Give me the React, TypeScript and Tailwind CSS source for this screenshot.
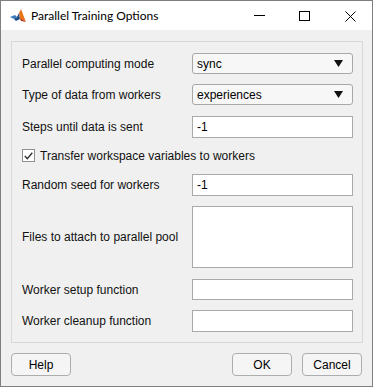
import React from "react";

const font = { fontFamily: '"Liberation Sans", Arial, sans-serif' };

function Dropdown({ value }: { value: string }) {
  return (
    <div className="w-[161px] h-[21px] rounded-[3px] border border-[#a8a8a8] bg-[#f7f7f7] flex items-center justify-between pl-[4px] pr-[9px] text-[12px] text-black">
      <span>{value}</span>
      <svg width="9" height="7" viewBox="0 0 9 7"><path d="M0 0 H9 L4.5 7 Z" fill="#111" /></svg>
    </div>
  );
}

function Field({ value = "", h = "h-[22px]" }: { value?: string; h?: string }) {
  return (
    <div className={`w-[161px] ${h} border border-[#a9a9a9] bg-white flex items-center pl-[4px] text-[12px] text-black`}>
      {value}
    </div>
  );
}

function Row({ label, children, className = "" }: { label: string; children: React.ReactNode; className?: string }) {
  return (
    <div className={`flex items-center justify-between ${className}`}>
      <span className="text-[12px] text-[#111]">{label}</span>
      {children}
    </div>
  );
}

function Btn({ label, w }: { label: string; w: string }) {
  return (
    <div className={`${w} h-[23px] rounded-[4px] border border-[#adadad] bg-[#f5f5f5] flex items-center justify-center text-[12px] text-black`}>
      {label}
    </div>
  );
}

export default function App() {
  return (
    <div className="w-[374px] h-[388px] bg-white">
      <div className="w-[373px] h-[387px] border border-[#7f7f7f] flex flex-col" style={font}>
        <div className="h-[29px] bg-white flex items-center relative">
          <svg className="ml-[9px]" width="16" height="14" viewBox="0 0 16 14">
            <path d="M0 8 L5 6 L7 8 L4 10 Z" fill="#3a7bbf" />
            <path d="M4 10 L7 8 L9 4 L10 10 L6 12 Z" fill="#1f4f8a" />
            <path d="M9 4 L11 0 L14 8 L16 13 L12 10 L10 10 Z" fill="#e8741a" />
            <path d="M10 10 L12 10 L16 13 L11 12 Z" fill="#c0392b" />
          </svg>
          <span className="ml-[5px] text-[12px] text-black" style={{ fontFamily: 'Lato, "Noto Sans", sans-serif' }}>
            Parallel Training Options
          </span>
          <div className="absolute left-[253px] top-[14px] w-[11px] h-[1px] bg-black" />
          <div className="absolute left-[298px] top-[10px] w-[11px] h-[10px] border border-black" />
          <svg className="absolute left-[344px] top-[10px]" width="11" height="11" viewBox="0 0 11 11">
            <path d="M0.5 0.5 L10.5 10.5 M10.5 0.5 L0.5 10.5" stroke="#000" strokeWidth="1" />
          </svg>
        </div>
        <div className="flex-1 bg-[#f0f0f0] flex flex-col">
          <div className="ml-[10px] mt-[11px] w-[352px] h-[302px] border border-[#d9d9d9] flex flex-col pl-[10px] pr-[9px] pt-[11px]">
            <Row label="Parallel computing mode"><Dropdown value="sync" /></Row>
            <Row label="Type of data from workers" className="mt-[10px]"><Dropdown value="experiences" /></Row>
            <Row label="Steps until data is sent" className="mt-[11px]"><Field value="-1" /></Row>
            <div className="mt-[11px] flex items-center h-[13px]">
              <div className="w-[13px] h-[13px] border border-[#8f8f8f] bg-white flex items-center justify-center">
                <svg width="9" height="8" viewBox="0 0 9 8"><path d="M0.8 4 L3.3 6.6 L8.3 0.8" fill="none" stroke="#333" strokeWidth="1.4" /></svg>
              </div>
              <span className="ml-[5px] text-[12px] text-[#111]">Transfer workspace variables to workers</span>
            </div>
            <Row label="Random seed for workers" className="mt-[12px]"><Field value="-1" /></Row>
            <Row label="Files to attach to parallel pool" className="mt-[10px]"><Field h="h-[62px]" /></Row>
            <Row label="Worker setup function" className="mt-[11px]"><Field h="h-[21px]" /></Row>
            <Row label="Worker cleanup function" className="mt-[10px]"><Field /></Row>
          </div>
          <div className="mt-[10px] ml-[10px] mr-[10px] flex items-center">
            <Btn label="Help" w="w-[60px]" />
            <div className="flex-1" />
            <Btn label="OK" w="w-[60px]" />
            <div className="w-[10px]" />
            <Btn label="Cancel" w="w-[60px]" />
          </div>
        </div>
      </div>
    </div>
  );
}
